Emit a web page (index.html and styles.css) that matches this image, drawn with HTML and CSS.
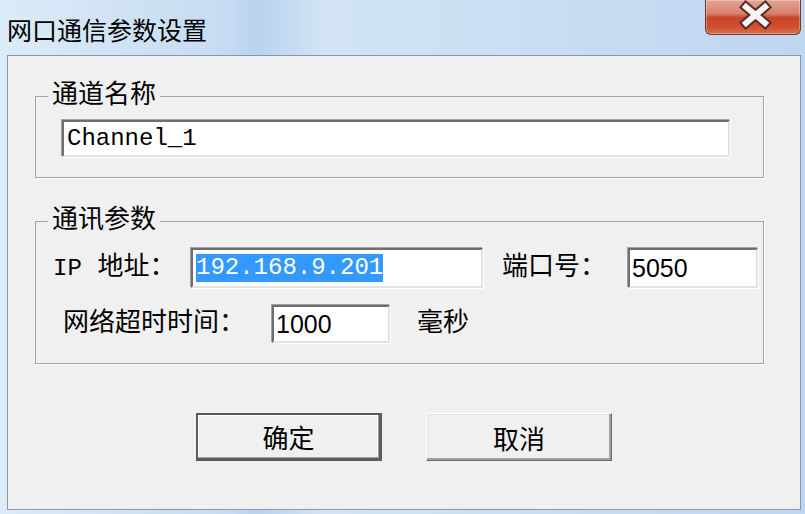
FILE: index.html
```html
<!DOCTYPE html>
<html lang="zh-CN">
<head>
    <meta charset="UTF-8">
    <meta name="viewport" content="width=device-width, initial-scale=1.0">
    <title>网口通信参数设置</title>
    <link rel="stylesheet" href="styles.css">
</head>
<body>
    <div class="window">
        <div class="titlebar">
            <span class="title">网口通信参数设置</span>
            <button class="close" title="关闭">
                <svg width="96" height="35" viewBox="0 0 96 35">
                    <path d="M41 8 L60 24 M60 8 L41 24" stroke="#5a2c26" stroke-width="10" stroke-linecap="square" fill="none"/>
                    <path d="M41 8 L60 24 M60 8 L41 24" stroke="#f4f4f4" stroke-width="6" stroke-linecap="square" fill="none"/>
                </svg>
            </button>
        </div>
        <div class="client">
            <fieldset class="group">
                <legend>通道名称</legend>
                <div class="group-body body-name">
                    <div class="edit edit-name">Channel_1</div>
                </div>
            </fieldset>
            <fieldset class="group group-comm">
                <legend>通讯参数</legend>
                <div class="group-body body-comm">
                    <div class="row">
                        <label class="lbl lbl-ip"><span class="latin">IP</span> 地址：</label>
                        <div class="edit edit-ip"><span class="sel">192.168.9.201</span></div>
                        <label class="lbl lbl-port">端口号：</label>
                        <div class="edit edit-num edit-port">5050</div>
                    </div>
                    <div class="row row-timeout">
                        <label class="lbl lbl-timeout">网络超时时间：</label>
                        <div class="edit edit-num edit-timeout">1000</div>
                        <span class="lbl unit">毫秒</span>
                    </div>
                </div>
            </fieldset>
            <div class="buttons">
                <button class="btn btn-default">确定</button>
                <button class="btn">取消</button>
            </div>
        </div>
    </div>
</body>
</html>
```

FILE: styles.css
```css
body {
    margin: 0;
    font-family: "Liberation Mono", "Noto Sans CJK SC", monospace;
    color: #000;
}
.window {
    width: 805px;
    height: 514px;
    background: linear-gradient(to right, #dcebf8 0, #c6dcf2 28%, #b9d3ee 32%, #d2e4f6 40%, #c8ddf3 70%, #bed6ef 100%);
    overflow: hidden;
}
.titlebar {
    height: 55px;
    display: flex;
    justify-content: space-between;
    align-items: flex-start;
}
.title {
    margin: 14px 0 0 7px;
    font-family: "Noto Sans CJK SC", sans-serif;
    font-size: 25px;
    line-height: 30px;
}
.close {
    width: 96px;
    height: 35px;
    margin-right: 4px;
    padding: 0;
    border: 1px solid #6a3a33;
    border-top: none;
    border-radius: 0 0 6px 6px;
    background: linear-gradient(#e2a496 0%, #d8806d 40%, #c9442a 52%, #d0502f 80%, #dc6e50 100%);
    box-shadow: inset 0 0 0 1px rgba(255, 255, 255, 0.3);
}
.close svg {
    display: block;
    margin: -1px 0 0 -1px;
}
.client {
    box-sizing: border-box;
    height: 455px;
    margin: 0 4px 0 7px;
    padding-top: 25px;
    border: 1px solid #8898ab;
    background: #f0f0f0;
}
.group {
    margin: 0 36px 0 27px;
    padding: 0;
    min-width: 0;
    border: 1px solid #a5a5a5;
    box-shadow: 1px 1px 0 #fff;
}
.group legend {
    margin-left: 12px;
    padding: 0 4px;
    font-size: 26px;
    line-height: 30px;
}
.group-comm {
    margin-top: 28px;
}
.body-name {
    padding: 9px 33px 20px 26px;
}
.body-comm {
    padding: 12px 0 20px 17px;
}
.edit {
    box-sizing: border-box;
    display: flex;
    align-items: center;
    padding-left: 3px;
    background: #fff;
    border: 2px solid;
    border-color: #6e6e6e #e3e3e3 #e3e3e3 #6e6e6e;
    box-shadow: -1px -1px 0 #a0a0a0, 1px 1px 0 #fff;
    font-size: 24px;
    white-space: nowrap;
}
.edit-name {
    height: 37px;
}
.edit-num {
    font-family: "Liberation Sans", sans-serif;
    font-size: 25px;
    padding-left: 2px;
}
.row {
    display: flex;
    align-items: center;
}
.row-timeout {
    margin-top: 17px;
    padding-left: 10px;
}
.lbl {
    font-size: 26px;
    line-height: 30px;
    white-space: nowrap;
}
.latin {
    font-size: 24px;
}
.lbl-ip {
    width: 138px;
}
.edit-ip {
    width: 292px;
    height: 40px;
}
.sel {
    background: #3399ff;
    color: #fff;
    line-height: 28px;
}
.lbl-port {
    width: 126px;
    margin-left: 19px;
}
.edit-port {
    width: 130px;
    height: 40px;
}
.lbl-timeout {
    width: 209px;
}
.edit-timeout {
    width: 118px;
    height: 38px;
}
.unit {
    margin-left: 27px;
}
.buttons {
    display: flex;
    justify-content: center;
    gap: 44px;
    margin-top: 49px;
}
.btn {
    width: 186px;
    height: 48px;
    padding: 0;
    font-family: "Noto Sans CJK SC", sans-serif;
    font-size: 26px;
    color: #000;
    background: #f0f0f0;
    border: 1px solid;
    border-color: #fff #696969 #696969 #fff;
    box-shadow: inset -2px -2px 0 #a0a0a0, inset 1px 1px 0 #e3e3e3;
}
.btn-default {
    border: 2px solid #5c5c5c;
    border-right-width: 3px;
    border-bottom-width: 3px;
    box-shadow: inset -1px -1px 0 #a0a0a0, inset 1px 1px 0 #fff;
}
```
